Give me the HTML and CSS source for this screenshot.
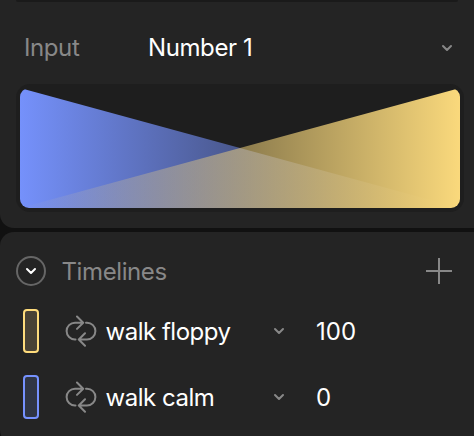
FILE: index.html
```html
<!DOCTYPE html>
<html lang="en">
<head>
<meta charset="utf-8">
<title>Blend state</title>
<link rel="stylesheet" href="styles.css">
</head>
<body>
<main class="inspector">
  <section class="panel panel-input">
    <div class="previous-field"></div>
    <div class="input-row">
      <span class="label">Input</span>
      <span class="value">Number 1</span>
      <svg class="chevron" viewBox="0 0 12 8"><path d="M2 2l4 4 4-4"/></svg>
    </div>
    <div class="blend">
      <svg class="blend-graph" viewBox="0 0 440 120" preserveAspectRatio="none">
        <defs>
          <linearGradient id="calm"><stop offset="0" stop-color="#7591fb"/><stop offset="1" stop-color="#7591fb" stop-opacity="0"/></linearGradient>
          <linearGradient id="floppy"><stop offset="0" stop-color="#fad97c" stop-opacity="0"/><stop offset="1" stop-color="#fad97c"/></linearGradient>
        </defs>
        <path fill="url(#calm)" d="M0 0L440 120H0Z"/>
        <path fill="url(#floppy)" d="M440 0V120H0Z"/>
      </svg>
    </div>
  </section>
  <section class="panel panel-timelines">
    <header class="heading">
      <span class="toggle"><svg class="chevron chevron-light" viewBox="0 0 12 8"><path d="M2 2l4 4 4-4"/></svg></span>
      <h2 class="label">Timelines</h2>
      <svg class="plus" viewBox="0 0 26 26"><path d="M13 0v26M0 13h26"/></svg>
    </header>
    <div class="timeline">
      <span class="swatch swatch-yellow"></span>
      <svg class="loop" viewBox="0 0 32 32"><path d="M10.5 24.5H10A8.4 8.4 0 0 1 10 7.7H18M12 1.5L18.2 7.7L12 13.9M21 7.7H22A8.4 8.4 0 0 1 22 24.5H14M20 18.3L13.8 24.5L20 30.7"/></svg>
      <span class="name">walk floppy</span>
      <svg class="chevron" viewBox="0 0 12 8"><path d="M2 2l4 4 4-4"/></svg>
      <span class="amount">100</span>
    </div>
    <div class="timeline">
      <span class="swatch swatch-blue"></span>
      <svg class="loop" viewBox="0 0 32 32"><path d="M10.5 24.5H10A8.4 8.4 0 0 1 10 7.7H18M12 1.5L18.2 7.7L12 13.9M21 7.7H22A8.4 8.4 0 0 1 22 24.5H14M20 18.3L13.8 24.5L20 30.7"/></svg>
      <span class="name">walk calm</span>
      <svg class="chevron" viewBox="0 0 12 8"><path d="M2 2l4 4 4-4"/></svg>
      <span class="amount">0</span>
    </div>
  </section>
</main>
</body>
</html>
```
FILE: styles.css
```css
* { box-sizing: border-box; }

body {
  margin: 0;
  height: 436px;
  overflow: hidden;
  background: #111;
  color: #fff;
  font: 24px/30px Inter, "Liberation Sans", sans-serif;
  letter-spacing: -0.4px;
}

.inspector {
  display: flex;
  flex-direction: column;
  gap: 4px;
}

.panel { background: #242424; }

.panel-input {
  height: 228px;
  padding: 0 10px 16px 16px;
  border-radius: 0 0 0 14px;
}

.previous-field {
  height: 2px;
  margin-right: 6px;
  background: #1a1a1a;
  border-radius: 0 0 8px 8px;
}

.input-row {
  display: grid;
  grid-template-columns: 124px 1fr 12px;
  align-items: center;
  height: 82px;
  padding: 9px 11px 0 8px;
}

.label {
  margin: 0;
  color: #888;
  font-size: 24px;
  font-weight: 400;
}

.chevron {
  width: 12px;
  height: 8px;
  fill: none;
  stroke: #888;
  stroke-width: 2;
  stroke-linecap: round;
  stroke-linejoin: round;
}

.chevron-light { stroke: #fff; }

.blend {
  width: 448px;
  height: 128px;
  padding: 4px;
  background: #1e1e1e;
  border-radius: 14px;
}

.blend-graph {
  display: block;
  width: 440px;
  height: 120px;
  border-radius: 9px;
}

.panel-timelines {
  height: 212px;
  padding: 24px 0 0 16px;
  border-radius: 14px 0 0 14px;
}

.heading {
  display: grid;
  grid-template-columns: 45.5px 1fr 26px;
  align-items: center;
  height: 30px;
  margin-bottom: 12px;
  padding-right: 22px;
}

.heading .label {
  padding-top: 2px;
  line-height: 28px;
}

.toggle {
  display: flex;
  align-items: center;
  justify-content: center;
  width: 30px;
  height: 30px;
  border: 2px solid #666;
  border-radius: 50%;
}

.plus {
  width: 26px;
  height: 26px;
  fill: none;
  stroke: #888;
  stroke-width: 2;
}

.timeline {
  display: grid;
  grid-template-columns: 42px 48px 161px 43px 1fr;
  align-items: center;
  height: 66px;
  padding-left: 6px;
}

.swatch {
  width: 16px;
  height: 44px;
  margin-left: 1px;
  border: 2px solid;
  border-radius: 4px;
}

.swatch-yellow { border-color: #ffdc7c; background: #494235; }
.swatch-blue { border-color: #7692ff; background: #303645; }

.loop {
  width: 32px;
  height: 32px;
  margin-left: 1px;
  fill: none;
  stroke: #888;
  stroke-width: 2;
  stroke-linecap: round;
  stroke-linejoin: round;
}

.name,
.amount { padding-top: 2px; }

.name {
  margin-left: -6.5px;
  letter-spacing: -0.48px;
  white-space: nowrap;
}

.amount { letter-spacing: 0; }
```
